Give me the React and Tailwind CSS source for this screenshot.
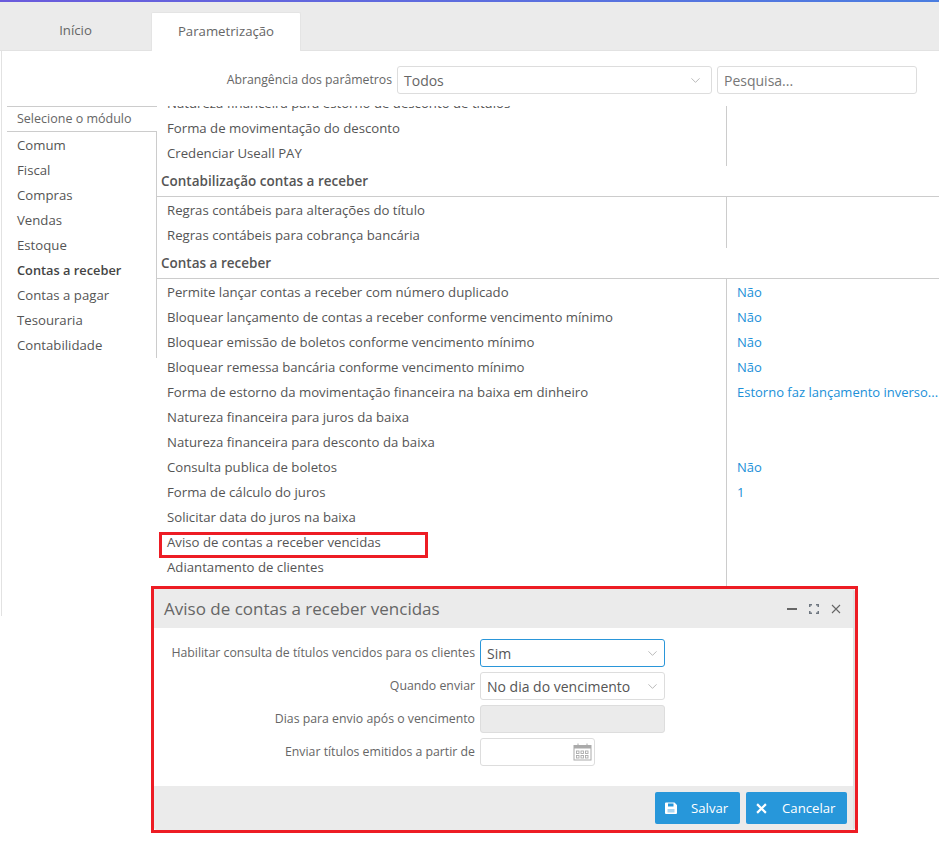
import React from 'react';
import { ChevronDown } from 'lucide-react';

const modulos = ['Comum', 'Fiscal', 'Compras', 'Vendas', 'Estoque', 'Contas a receber', 'Contas a pagar', 'Tesouraria', 'Contabilidade'];

const contasReceber = [
  ['Permite lançar contas a receber com número duplicado', 'Não'],
  ['Bloquear lançamento de contas a receber conforme vencimento mínimo', 'Não'],
  ['Bloquear emissão de boletos conforme vencimento mínimo', 'Não'],
  ['Bloquear remessa bancária conforme vencimento mínimo', 'Não'],
  ['Forma de estorno da movimentação financeira na baixa em dinheiro', 'Estorno faz lançamento inverso...'],
  ['Natureza financeira para juros da baixa', ''],
  ['Natureza financeira para desconto da baixa', ''],
  ['Consulta publica de boletos', 'Não'],
  ['Forma de cálculo do juros', '1'],
  ['Solicitar data do juros na baixa', ''],
  ['Aviso de contas a receber vencidas', ''],
  ['Adiantamento de clientes', ''],
  ['', ''],
];

const Row = ({ label, value, first }) => (
  <div className={`flex items-stretch ${first ? 'h-[26px]' : 'h-[25px]'}`}>
    <div className={`flex w-[569px] shrink-0 items-center truncate pl-[10px] ${first ? 'pt-[2px]' : ''}`}>{label}</div>
    <div className={`flex flex-1 items-center whitespace-nowrap border-l border-[#cccccc] pl-[10px] text-[13px] text-[#2090d8] ${first ? 'pt-[2px]' : ''}`}>{value}</div>
  </div>
);

const Section = ({ title }) => (
  <div className="flex h-[31px] items-center border-b border-[#cccccc] pl-[4px] pt-px text-[13.5px] font-semibold text-[#555555]">{title}</div>
);

const FormRow = ({ label, children }) => (
  <div className="flex h-[28px] items-center">
    <label className="w-[326px] shrink-0 truncate pr-[5px] text-right text-[12.3px] text-[#666666]">{label}</label>
    {children}
  </div>
);

const SelectBox = ({ value, focused }) => (
  <div className={`flex h-[28px] w-[185px] items-center justify-between rounded-[3px] border pl-[6px] pr-[4px] text-[14px] text-[#555555] ${focused ? 'border-[#2a96d9]' : 'border-[#dddddd]'}`}>
    {value}
    <ChevronDown className="h-[15px] w-[15px] text-[#aaaaaa]" strokeWidth={1.3} />
  </div>
);

const CalendarIcon = () => (
  <svg width="19" height="18" viewBox="0 0 19 18" fill="none" className="text-[#aaaaaa]">
    <rect x="1" y="2.5" width="17" height="14.5" stroke="currentColor" />
    <rect x="1" y="2.5" width="17" height="3" fill="currentColor" />
    <path d="M5 0.5v3M14 0.5v3" stroke="currentColor" />
    <rect x="3.5" y="8" width="2.5" height="2.5" stroke="currentColor" strokeWidth="0.9" />
    <rect x="8" y="8" width="2.5" height="2.5" stroke="currentColor" strokeWidth="0.9" />
    <rect x="12.5" y="8" width="2.5" height="2.5" stroke="currentColor" strokeWidth="0.9" />
    <rect x="3.5" y="12.5" width="2.5" height="2.5" stroke="currentColor" strokeWidth="0.9" />
    <rect x="8" y="12.5" width="2.5" height="2.5" stroke="currentColor" strokeWidth="0.9" />
    <rect x="12.5" y="12.5" width="2.5" height="2.5" stroke="currentColor" strokeWidth="0.9" />
  </svg>
);

const SaveIcon = () => (
  <svg width="12" height="12" viewBox="0 0 12 12">
    <path fillRule="evenodd" fill="currentColor" d="M1 0.5H9.5L12 3V11A1 1 0 0 1 11 12H1A1 1 0 0 1 0 11V1.5A1 1 0 0 1 1 0.5ZM3 1.5V4.5H8.5V1.5Z" />
    <rect x="2.5" y="7" width="7" height="3.5" fill="#a9d5f0" />
  </svg>
);

const MaximizeIcon = () => (
  <svg width="10" height="10" viewBox="0 0 10 10" fill="none" stroke="#6f7780" strokeWidth="1.5">
    <path d="M0.75 3V0.75H3M7 0.75H9.25V3M9.25 7V9.25H7M3 9.25H0.75V7" />
  </svg>
);

const CloseIcon = ({ size, weight }) => (
  <svg width={size} height={size} viewBox="0 0 10 10" fill="none" stroke="currentColor" strokeWidth={weight}>
    <path d="M1 1L9 9M9 1L1 9" />
  </svg>
);

export default function App() {
  return (
    <div className="relative h-[842px] w-[939px] overflow-hidden bg-white text-[13.2px] text-[#555555]" style={{ fontFamily: '"Open Sans", "Noto Sans", sans-serif' }}>
      {/* barra superior */}
      <div className="h-[2px] bg-gradient-to-r from-[#6a5bdc] to-[#4a7de0]" />

      {/* abas */}
      <div className="flex h-[49px] items-end border-b border-[#e2e2e2] bg-[#ebebeb]">
        <div className="flex h-[38px] w-[151px] items-center justify-center text-[#666666]">Início</div>
        <div className="-mb-px flex h-[39px] w-[150px] items-center justify-center rounded-t-[2px] border-x border-t border-[#e4e4e4] bg-white text-[#666666]">Parametrização</div>
      </div>

      <div className="ml-px h-[565px] border-l border-[#e2e2e2]">
        {/* filtro */}
        <div className="flex h-[55px] items-start justify-end pr-[22px] pt-[15px]">
          <span className="mr-[5px] flex h-[28px] items-center text-[12.25px] text-[#666666]">Abrangência dos parâmetros</span>
          <div className="flex h-[28px] w-[315px] items-center justify-between rounded-[3px] border border-[#dddddd] pl-[6px] pr-[8px] text-[14px] text-[#666666]">
            Todos
            <ChevronDown className="h-[15px] w-[15px] text-[#aaaaaa]" strokeWidth={1.3} />
          </div>
          <div className="ml-[5px] flex h-[28px] w-[200px] items-center rounded-[3px] border border-[#dddddd] pl-[6px] text-[14px] text-[#777777]">Pesquisa...</div>
        </div>

        <div className="flex">
          {/* modulos */}
          <div className="ml-[5px] w-[150px] shrink-0">
            <div className="flex h-[26px] items-center border-y border-[#cccccc] pl-[10px] text-[12.5px] text-[#666666]">Selecione o módulo</div>
            <div className="h-[226px] border-r border-[#cccccc] py-px">
              {modulos.map((m) => (
                <div key={m} className={`flex h-[25px] items-center pl-[10px] ${m === 'Contas a receber' ? 'text-[12.8px] font-semibold text-[#444444]' : ''}`}>{m}</div>
              ))}
            </div>
          </div>

          {/* parametros */}
          <div className="h-[510px] flex-1 overflow-hidden">
            <div className="-mt-[15px]">
              <Row label="Natureza financeira para estorno de desconto de títulos" value="" />
              <Row label="Forma de movimentação do desconto" value="" />
              <Row label="Credenciar Useall PAY" value="" />
              <Section title="Contabilização contas a receber" />
              <Row first label="Regras contábeis para alterações do título" value="" />
              <Row label="Regras contábeis para cobrança bancária" value="" />
              <Section title="Contas a receber" />
              {contasReceber.map(([label, value], i) => (
                <Row key={i} first={i === 0} label={label} value={value} />
              ))}
            </div>
          </div>
        </div>
      </div>

      {/* destaque vermelho */}
      <div className="absolute left-[159px] top-[532px] h-[26px] w-[269px] border-[3px] border-[#ed1c24]" />

      {/* janela */}
      <div className="absolute left-[151px] top-[586px] h-[247px] w-[707px] border-[3px] border-[#ed1c24] bg-white">
        <div className="flex h-full flex-col rounded-[3px] border-r-[2px] border-[#e0e0e0]">
          <div className="flex h-[39px] shrink-0 items-center justify-between bg-[#ebebeb] px-[10px] pr-[12px]">
            <span className="text-[17px] text-[#666666]">Aviso de contas a receber vencidas</span>
            <div className="flex items-center gap-[12px] text-[#666666]">
              <span className="h-[2px] w-[10px] bg-[#666666]" />
              <MaximizeIcon />
              <CloseIcon size={10} weight={1.1} />
            </div>
          </div>
          <div className="flex flex-1 flex-col gap-[5px] pt-[11px]">
            <FormRow label="Habilitar consulta de títulos vencidos para os clientes"><SelectBox value="Sim" focused /></FormRow>
            <FormRow label="Quando enviar"><SelectBox value="No dia do vencimento" /></FormRow>
            <FormRow label="Dias para envio após o vencimento">
              <div className="h-[28px] w-[185px] rounded-[3px] border border-[#dddddd] bg-[#ebebeb]" />
            </FormRow>
            <FormRow label="Enviar títulos emitidos a partir de">
              <div className="flex h-[28px] w-[115px] items-center justify-end rounded-[3px] border border-[#dddddd] pr-[2px]"><CalendarIcon /></div>
            </FormRow>
          </div>
          <div className="flex h-[44px] shrink-0 items-start justify-end gap-[6px] rounded-b-[3px] bg-[#ebebeb] pr-[6px] pt-[6px]">
            <button className="flex h-[32px] w-[85px] items-center rounded-[2px] bg-[#2797da] pl-[10px] text-white">
              <SaveIcon />
              <span className="ml-[14px] pt-px">Salvar</span>
            </button>
            <button className="flex h-[32px] w-[101px] items-center rounded-[2px] bg-[#2797da] pl-[10px] text-white">
              <CloseIcon size={11} weight={2} />
              <span className="ml-[15px] pt-px">Cancelar</span>
            </button>
          </div>
        </div>
      </div>
    </div>
  );
}
